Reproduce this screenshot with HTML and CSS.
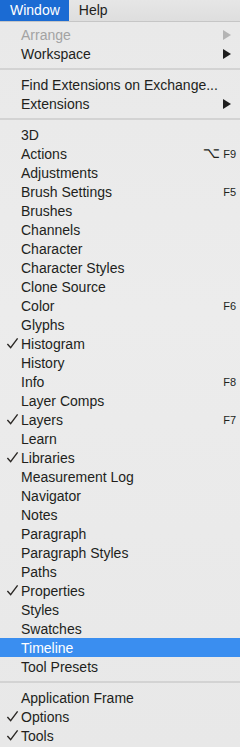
FILE: index.html
```html
<!DOCTYPE html>
<html lang="en">
<head>
  <meta charset="UTF-8">
  <title>Window Menu</title>
  <meta name="viewport" content="width=device-width, initial-scale=1.0">
  <link rel="stylesheet" href="styles.css">
</head>
<body>
  <!-- Menu bar -->
  <div class="menubar">
    <div class="bar-item active">Window</div>
    <div class="bar-item">Help</div>
  </div>

  <!-- Dropdown -->
  <div class="menu">
    <div class="item disabled"><span class="check"></span><span class="label">Arrange</span><span class="arrow"></span></div>
    <div class="item"><span class="check"></span><span class="label">Workspace</span><span class="arrow"></span></div>
    <div class="sep"></div>
    <div class="item"><span class="check"></span><span class="label">Find Extensions on Exchange...</span></div>
    <div class="item"><span class="check"></span><span class="label">Extensions</span><span class="arrow"></span></div>
    <div class="sep"></div>
    <div class="item"><span class="check"></span><span class="label">3D</span></div>
    <div class="item"><span class="check"></span><span class="label">Actions</span><span class="key"><span class="opt">&#8997;</span>F9</span></div>
    <div class="item"><span class="check"></span><span class="label">Adjustments</span></div>
    <div class="item"><span class="check"></span><span class="label">Brush Settings</span><span class="key">F5</span></div>
    <div class="item"><span class="check"></span><span class="label">Brushes</span></div>
    <div class="item"><span class="check"></span><span class="label">Channels</span></div>
    <div class="item"><span class="check"></span><span class="label">Character</span></div>
    <div class="item"><span class="check"></span><span class="label">Character Styles</span></div>
    <div class="item"><span class="check"></span><span class="label">Clone Source</span></div>
    <div class="item"><span class="check"></span><span class="label">Color</span><span class="key">F6</span></div>
    <div class="item"><span class="check"></span><span class="label">Glyphs</span></div>
    <div class="item checked"><span class="check"><svg viewBox="0 0 14 14"><path d="M1.5 7.5 L5 11.5 L12.5 1.5"/></svg></span><span class="label">Histogram</span></div>
    <div class="item"><span class="check"></span><span class="label">History</span></div>
    <div class="item"><span class="check"></span><span class="label">Info</span><span class="key">F8</span></div>
    <div class="item"><span class="check"></span><span class="label">Layer Comps</span></div>
    <div class="item checked"><span class="check"><svg viewBox="0 0 14 14"><path d="M1.5 7.5 L5 11.5 L12.5 1.5"/></svg></span><span class="label">Layers</span><span class="key">F7</span></div>
    <div class="item"><span class="check"></span><span class="label">Learn</span></div>
    <div class="item checked"><span class="check"><svg viewBox="0 0 14 14"><path d="M1.5 7.5 L5 11.5 L12.5 1.5"/></svg></span><span class="label">Libraries</span></div>
    <div class="item"><span class="check"></span><span class="label">Measurement Log</span></div>
    <div class="item"><span class="check"></span><span class="label">Navigator</span></div>
    <div class="item"><span class="check"></span><span class="label">Notes</span></div>
    <div class="item"><span class="check"></span><span class="label">Paragraph</span></div>
    <div class="item"><span class="check"></span><span class="label">Paragraph Styles</span></div>
    <div class="item"><span class="check"></span><span class="label">Paths</span></div>
    <div class="item checked"><span class="check"><svg viewBox="0 0 14 14"><path d="M1.5 7.5 L5 11.5 L12.5 1.5"/></svg></span><span class="label">Properties</span></div>
    <div class="item"><span class="check"></span><span class="label">Styles</span></div>
    <div class="item"><span class="check"></span><span class="label">Swatches</span></div>
    <div class="item selected"><span class="check"></span><span class="label">Timeline</span></div>
    <div class="item"><span class="check"></span><span class="label">Tool Presets</span></div>
    <div class="sep"></div>
    <div class="item"><span class="check"></span><span class="label">Application Frame</span></div>
    <div class="item checked"><span class="check"><svg viewBox="0 0 14 14"><path d="M1.5 7.5 L5 11.5 L12.5 1.5"/></svg></span><span class="label">Options</span></div>
    <div class="item checked"><span class="check"><svg viewBox="0 0 14 14"><path d="M1.5 7.5 L5 11.5 L12.5 1.5"/></svg></span><span class="label">Tools</span></div>
  </div>
</body>
</html>
```

FILE: styles.css
```css
* {
  box-sizing: border-box;
}

html, body {
  margin: 0;
  padding: 0;
  font-family: "Liberation Sans", Arial, sans-serif;
  font-size: 14px;
  color: #221f1c;
  background: #ebebeb;
}

.menubar {
  display: flex;
  height: 22px;
  background: linear-gradient(to bottom, #e6e6e6, #dedede);
  border-bottom: 1px solid #c6c6c6;
}

.bar-item {
  padding: 0 9px 0 10px;
  line-height: 21px;
  font-size: 14px;
}

.bar-item.active {
  background: #1b6bd3;
  color: #fff;
}

.menu {
  padding: 3px 0 2px;
  background: linear-gradient(to bottom, #e9e9e9, #ececec 40%, #e8e8e8);
}

.item {
  display: flex;
  align-items: center;
  height: 19px;
  padding-right: 4px;
}

.check {
  width: 21px;
  flex-shrink: 0;
  display: flex;
  align-items: center;
  padding-left: 6px;
}

.check svg {
  width: 13px;
  height: 13px;
  fill: none;
  stroke: #2a2724;
  stroke-width: 1.5;
}

.label {
  flex: 1;
  white-space: nowrap;
}

.arrow {
  width: 0;
  height: 0;
  margin-right: 5px;
  border-top: 5px solid transparent;
  border-bottom: 5px solid transparent;
  border-left: 8px solid #1e1e1e;
}

.key {
  font-size: 11px;
  display: flex;
  align-items: center;
}

.opt {
  font-family: "DejaVu Sans", sans-serif;
  font-size: 15px;
  line-height: 1;
  margin-right: 3px;
}

.disabled {
  color: #a3a3a3;
}

.disabled .arrow {
  border-left-color: #b4b4b4;
}

.selected {
  background: #3a8ef0;
  color: #fff;
}

.sep {
  height: 2px;
  margin: 5px 0;
  background: #d3d3d3;
}
```
